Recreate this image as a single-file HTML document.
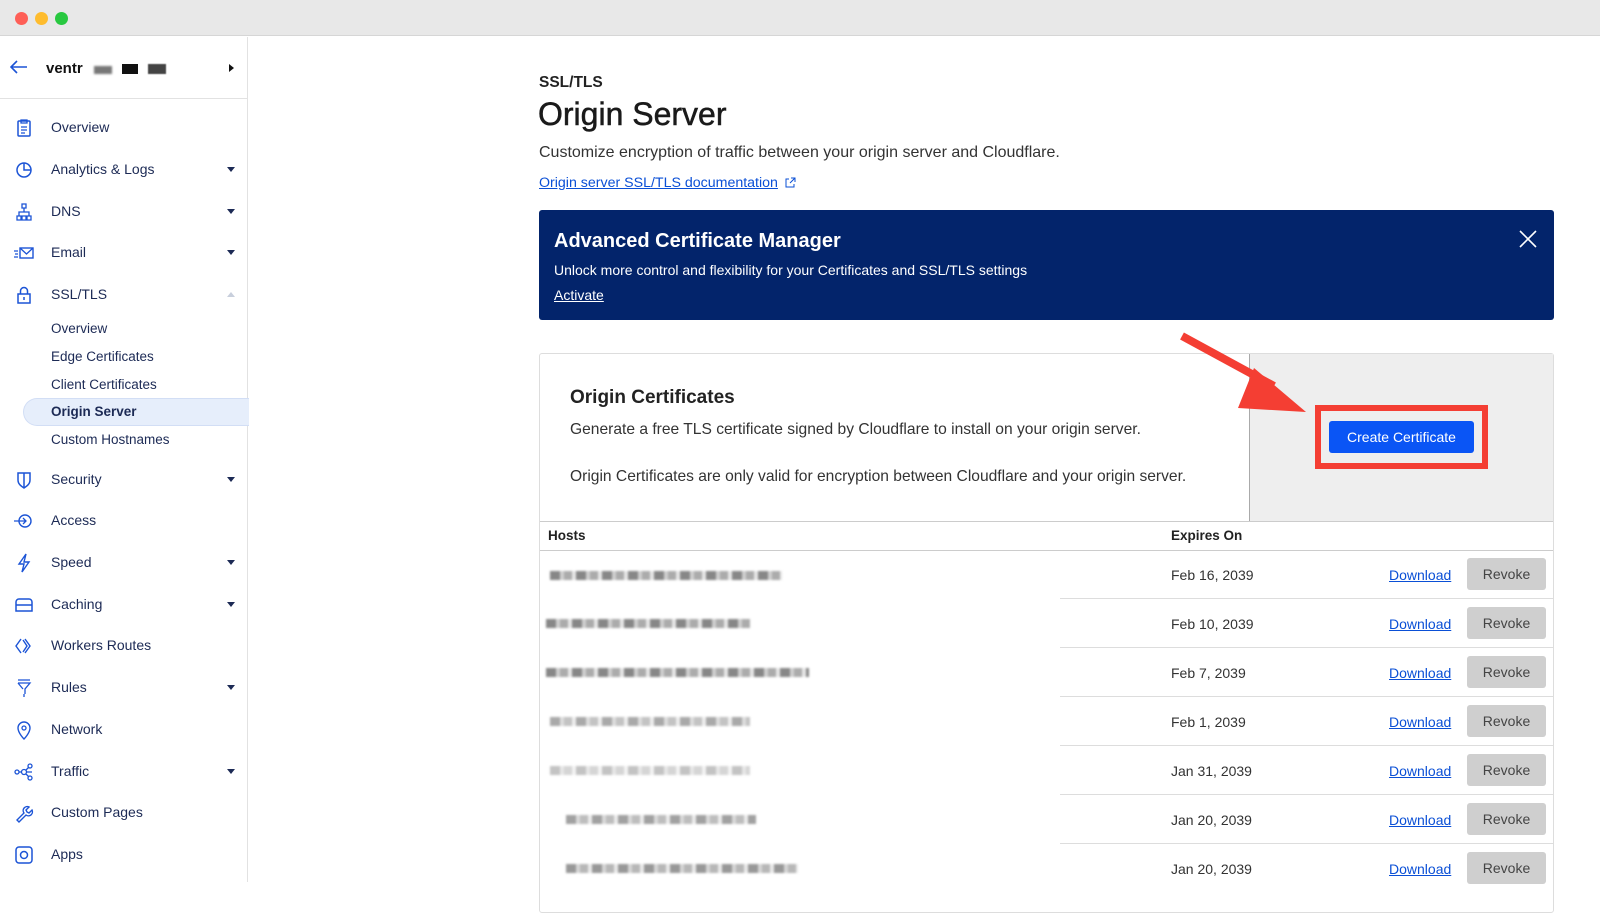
<!DOCTYPE html>
<html><head><meta charset="utf-8"><style>
*{margin:0;padding:0;box-sizing:border-box}
body{width:1600px;height:882px;overflow:hidden;background:#fff;font-family:"Liberation Sans",Arial,sans-serif;color:#222;position:relative}
.abs{position:absolute}
.tb{left:0;top:0;width:1600px;height:36px;background:#e8e8e8;border-bottom:1px solid #d6d6d6}
.dot{top:12px;width:13px;height:13px;border-radius:50%}
.side{left:0;top:37px;width:248px;height:845px;border-right:1px solid #e2e2e2}
.nav{position:absolute;left:51px;font-size:14px;color:#1c2a55;line-height:18px}
.ic{position:absolute;left:14px;width:20px;height:20px}
.car{position:absolute;left:227px;width:0;height:0;border-left:4.5px solid transparent;border-right:4.5px solid transparent;border-top:5px solid #1c2a55}
.sub{position:absolute;left:51px;font-size:13.5px;color:#1c2a55;line-height:18px}
.t{position:absolute;white-space:nowrap}
.row{position:absolute;left:1060px;width:494px;height:1px;background:#ddd}
.dl{position:absolute;left:1389px;font-size:14px;color:#0a4fd6;text-decoration:underline}
.rv{position:absolute;left:1467px;width:79px;height:32px;background:#cfcfcf;border-radius:3px;font-size:14px;color:#444;text-align:center;line-height:32px}
.ex{position:absolute;left:1171px;font-size:14px;color:#333}
.blur{position:absolute;height:9px;background:repeating-linear-gradient(90deg,#555 0 10px,#bbb 10px 14px,#888 14px 22px,#ddd 22px 26px);opacity:.7;filter:blur(1px)}
</style></head><body>
<div class="abs tb"></div>
<div class="abs dot" style="left:15px;background:#fe5f57"></div>
<div class="abs dot" style="left:35px;background:#febc2e"></div>
<div class="abs dot" style="left:55px;background:#28c840"></div>

<div class="abs side"></div>
<svg class="abs" style="left:10px;top:60px" width="18" height="14" viewBox="0 0 18 14"><path d="M17 7H2M7 1L1 7l6 6" stroke="#1c54d6" stroke-width="1.6" fill="none"/></svg>
<div class="t" style="left:46px;top:60px;font-size:15px;font-weight:bold;color:#111">ventr</div>
<div class="abs" style="left:94px;top:66px;width:18px;height:8px;background:#777;filter:blur(1px)"></div>
<div class="abs" style="left:122px;top:64px;width:16px;height:10px;background:#111"></div>
<div class="abs" style="left:148px;top:64px;width:18px;height:10px;background:#444;filter:blur(.6px)"></div>
<div class="abs" style="left:229px;top:64px;border-top:4px solid transparent;border-bottom:4px solid transparent;border-left:5px solid #111"></div>
<div class="abs" style="left:0;top:98px;width:248px;height:1px;background:#e2e2e2"></div>

<div class="abs" style="left:23px;top:398px;width:226px;height:28px;background:#e6eefb;border-radius:14px 0 0 14px;border:1px solid #d2def5;border-right:none"></div>

<svg class="ic" style="top:118px" viewBox="0 0 20 20"><rect x="4" y="3" width="12" height="15" rx="1" stroke="#1c54d6" stroke-width="1.5" fill="none"/><path d="M7 2h6v3H7zM7 9h6M7 12h6M7 15h4" stroke="#1c54d6" stroke-width="1.3" fill="none"/></svg>
<div class="nav" style="top:118px">Overview</div>
<svg class="ic" style="top:160px" viewBox="0 0 20 20"><circle cx="10" cy="10" r="7" stroke="#1c54d6" stroke-width="1.5" fill="none"/><path d="M10 3v7h7" stroke="#1c54d6" stroke-width="1.5" fill="none"/></svg>
<div class="nav" style="top:160px">Analytics &amp; Logs</div><div class="car" style="top:167px"></div>
<svg class="ic" style="top:202px" viewBox="0 0 20 20"><path d="M8 2h4v4H8zM3 14h4v4H3zM8 14h4v4H8zM13 14h4v4h-4zM10 6v4M5 14v-4h10v4" stroke="#1c54d6" stroke-width="1.3" fill="none"/></svg>
<div class="nav" style="top:202px">DNS</div><div class="car" style="top:209px"></div>
<svg class="ic" style="top:243px" viewBox="0 0 20 20"><rect x="6" y="5" width="13" height="10" stroke="#1c54d6" stroke-width="1.4" fill="none"/><path d="M6 5l6.5 6L19 5M0 8h4M1 11h3M0 14h4" stroke="#1c54d6" stroke-width="1.3" fill="none"/></svg>
<div class="nav" style="top:243px">Email</div><div class="car" style="top:250px"></div>
<svg class="ic" style="top:285px" viewBox="0 0 20 20"><rect x="4" y="9" width="12" height="9" stroke="#1c54d6" stroke-width="1.5" fill="none"/><path d="M6.5 9V6a3.5 3.5 0 017 0v3M10 12v3" stroke="#1c54d6" stroke-width="1.5" fill="none"/></svg>
<div class="nav" style="top:285px">SSL/TLS</div>
<div class="abs" style="left:227px;top:292px;border-left:4.5px solid transparent;border-right:4.5px solid transparent;border-bottom:5px solid #c8cfdc"></div>
<div class="sub" style="top:320px">Overview</div>
<div class="sub" style="top:348px">Edge Certificates</div>
<div class="sub" style="top:376px">Client Certificates</div>
<div class="sub" style="top:403px;font-weight:bold">Origin Server</div>
<div class="sub" style="top:431px">Custom Hostnames</div>
<svg class="ic" style="top:470px" viewBox="0 0 20 20"><path d="M4 3h12v7c0 4-3 6-6 8-3-2-6-4-6-8z M10 3v15" stroke="#1c54d6" stroke-width="1.5" fill="none"/></svg>
<div class="nav" style="top:470px">Security</div><div class="car" style="top:477px"></div>
<svg class="ic" style="top:511px" viewBox="0 0 20 20"><circle cx="11" cy="10" r="6" stroke="#1c54d6" stroke-width="1.4" fill="none"/><path d="M0 10h12M9 7l3 3-3 3" stroke="#1c54d6" stroke-width="1.3" fill="none"/></svg>
<div class="nav" style="top:511px">Access</div>
<svg class="ic" style="top:553px" viewBox="0 0 20 20"><path d="M12 1L5 11h5l-2 8 7-10h-5z" stroke="#1c54d6" stroke-width="1.4" fill="none"/></svg>
<div class="nav" style="top:553px">Speed</div><div class="car" style="top:560px"></div>
<svg class="ic" style="top:595px" viewBox="0 0 20 20"><path d="M2 10V7a3 3 0 013-3h10a3 3 0 013 3v3M2 10h16v6H2zM2 10" stroke="#1c54d6" stroke-width="1.5" fill="none"/></svg>
<div class="nav" style="top:595px">Caching</div><div class="car" style="top:602px"></div>
<svg class="ic" style="top:636px" viewBox="0 0 20 20"><path d="M7 3L2 10l5 7M11 3l5 7-5 7M9 4l4 6-4 6" stroke="#1c54d6" stroke-width="1.4" fill="none"/></svg>
<div class="nav" style="top:636px">Workers Routes</div>
<svg class="ic" style="top:678px" viewBox="0 0 20 20"><path d="M4 2h12M4 5h12l-5 6v5M9 11L4 5M10 16v3" stroke="#1c54d6" stroke-width="1.3" fill="none"/></svg>
<div class="nav" style="top:678px">Rules</div><div class="car" style="top:685px"></div>
<svg class="ic" style="top:720px" viewBox="0 0 20 20"><path d="M10 19s-6-6-6-11a6 6 0 0112 0c0 5-6 11-6 11z" stroke="#1c54d6" stroke-width="1.4" fill="none"/><circle cx="10" cy="8" r="2" stroke="#1c54d6" stroke-width="1.3" fill="none"/></svg>
<div class="nav" style="top:720px">Network</div>
<svg class="ic" style="top:762px" viewBox="0 0 20 20"><circle cx="3" cy="10" r="2" stroke="#1c54d6" stroke-width="1.3" fill="none"/><circle cx="10" cy="10" r="2.5" stroke="#1c54d6" stroke-width="1.3" fill="none"/><circle cx="16" cy="4" r="2" stroke="#1c54d6" stroke-width="1.3" fill="none"/><circle cx="16" cy="16" r="2" stroke="#1c54d6" stroke-width="1.3" fill="none"/><path d="M5 10h2.5M12 8l3-3M12 12l3 3M12.5 10H18" stroke="#1c54d6" stroke-width="1.3"/></svg>
<div class="nav" style="top:762px">Traffic</div><div class="car" style="top:769px"></div>
<svg class="ic" style="top:803px" viewBox="0 0 20 20"><path d="M3 17l7-7a4 4 0 015-6l-3 3 1 2 2 1 3-3a4 4 0 01-6 5l-7 7z" stroke="#1c54d6" stroke-width="1.4" fill="none"/></svg>
<div class="nav" style="top:803px">Custom Pages</div>
<svg class="ic" style="top:845px" viewBox="0 0 20 20"><rect x="2" y="2" width="16" height="16" rx="3" stroke="#1c54d6" stroke-width="1.5" fill="none"/><circle cx="10" cy="10" r="3.5" stroke="#1c54d6" stroke-width="1.5" fill="none"/></svg>
<div class="nav" style="top:845px">Apps</div>

<div class="t" style="left:539px;top:74px;font-size:15.5px;font-weight:bold;color:#222">SSL/TLS</div>
<div class="t" style="left:538px;top:96px;font-size:32px;color:#1a1a1a;-webkit-text-stroke:0.5px #1a1a1a">Origin Server</div>
<div class="t" style="left:539px;top:144px;font-size:16px;color:#333">Customize encryption of traffic between your origin server and Cloudflare.</div>
<div class="t" style="left:539px;top:175px;font-size:14.2px;color:#0a4fd6;text-decoration:underline">Origin server SSL/TLS documentation</div>
<svg class="abs" style="left:784px;top:177px" width="12" height="12" viewBox="0 0 12 12"><path d="M5 2H2v8h8V7M7 1h4v4M11 1L6 6" stroke="#0a4fd6" stroke-width="1" fill="none"/></svg>

<div class="abs" style="left:539px;top:210px;width:1015px;height:110px;background:#03246b;border-radius:3px"></div>
<div class="t" style="left:554px;top:230px;font-size:20px;font-weight:bold;color:#fff">Advanced Certificate Manager</div>
<div class="t" style="left:554px;top:262px;font-size:14px;color:#fff">Unlock more control and flexibility for your Certificates and SSL/TLS settings</div>
<div class="t" style="left:554px;top:287px;font-size:14px;color:#fff;text-decoration:underline">Activate</div>
<svg class="abs" style="left:1518px;top:229px" width="20" height="20" viewBox="0 0 20 20"><path d="M2 2l16 16M18 2L2 18" stroke="#fff" stroke-width="1.6"/></svg>

<div class="abs" style="left:539px;top:353px;width:1015px;height:560px;border:1px solid #ddd;border-radius:3px"></div>
<div class="abs" style="left:1249px;top:354px;width:304px;height:167px;background:#eee;border-left:1px solid #aaa"></div>
<div class="abs" style="left:540px;top:521px;width:1013px;height:1px;background:#ccc"></div>
<div class="t" style="left:570px;top:387px;font-size:19px;font-weight:bold;color:#222">Origin Certificates</div>
<div class="t" style="left:570px;top:421px;font-size:15.6px;color:#333">Generate a free TLS certificate signed by Cloudflare to install on your origin server.</div>
<div class="t" style="left:570px;top:468px;font-size:15.6px;color:#333">Origin Certificates are only valid for encryption between Cloudflare and your origin server.</div>

<div class="abs" style="left:1315px;top:405px;width:173px;height:64px;border:6px solid #f43e33"></div>
<div class="abs" style="left:1329px;top:421px;width:145px;height:32px;background:#0a55f5;border-radius:3px;color:#fff;font-size:14px;text-align:center;line-height:32px">Create Certificate</div>
<svg class="abs" style="left:1170px;top:330px" width="150" height="95" viewBox="0 0 150 95"><path d="M12 6l92 50" stroke="#f43e33" stroke-width="8"/><path d="M84 38l52 44-68-4z" fill="#f43e33"/></svg>

<div class="t" style="left:548px;top:528px;font-size:13.5px;font-weight:bold;color:#222">Hosts</div>
<div class="t" style="left:1171px;top:528px;font-size:13.5px;font-weight:bold;color:#222">Expires On</div>
<div class="abs" style="left:540px;top:550px;width:1013px;height:1px;background:#ccc"></div>

<div class="blur" style="left:550px;top:571px;width:232px"></div>
<div class="ex" style="top:567px">Feb 16, 2039</div><div class="dl" style="top:567px">Download</div><div class="rv" style="top:558px">Revoke</div>
<div class="row" style="top:598px"></div>
<div class="blur" style="left:546px;top:619px;width:204px"></div>
<div class="ex" style="top:616px">Feb 10, 2039</div><div class="dl" style="top:616px">Download</div><div class="rv" style="top:607px">Revoke</div>
<div class="row" style="top:647px"></div>
<div class="blur" style="left:546px;top:668px;width:263px"></div>
<div class="ex" style="top:665px">Feb 7, 2039</div><div class="dl" style="top:665px">Download</div><div class="rv" style="top:656px">Revoke</div>
<div class="row" style="top:696px"></div>
<div class="blur" style="left:550px;top:717px;width:200px;opacity:.5"></div>
<div class="ex" style="top:714px">Feb 1, 2039</div><div class="dl" style="top:714px">Download</div><div class="rv" style="top:705px">Revoke</div>
<div class="row" style="top:745px"></div>
<div class="blur" style="left:550px;top:766px;width:200px;opacity:.35"></div>
<div class="ex" style="top:763px">Jan 31, 2039</div><div class="dl" style="top:763px">Download</div><div class="rv" style="top:754px">Revoke</div>
<div class="row" style="top:794px"></div>
<div class="blur" style="left:566px;top:815px;width:190px;opacity:.55"></div>
<div class="ex" style="top:812px">Jan 20, 2039</div><div class="dl" style="top:812px">Download</div><div class="rv" style="top:803px">Revoke</div>
<div class="row" style="top:843px"></div>
<div class="blur" style="left:566px;top:864px;width:232px;opacity:.6"></div>
<div class="ex" style="top:861px">Jan 20, 2039</div><div class="dl" style="top:861px">Download</div><div class="rv" style="top:852px">Revoke</div>
</body></html>
